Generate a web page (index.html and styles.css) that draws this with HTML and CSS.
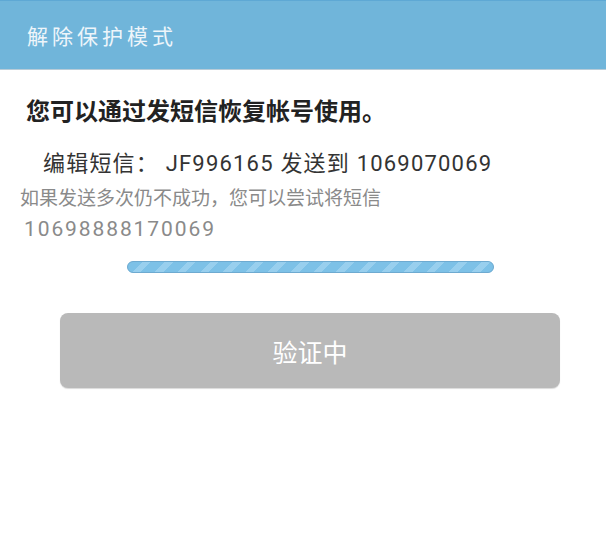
FILE: index.html
```html
<!DOCTYPE html>
<html lang="zh-CN">
<head>
<meta charset="utf-8">
<title>解除保护模式</title>
<link rel="stylesheet" href="styles.css">
</head>
<body>
<header class="topbar">
  <h1 class="topbar-title">解除保护模式</h1>
</header>
<main class="content">
  <p class="lead">您可以通过发短信恢复帐号使用。</p>
  <p class="instruction">编辑短信： JF996165 发送到 1069070069</p>
  <p class="hint">如果发送多次仍不成功，您可以尝试将短信<br><span class="hint-number">10698888170069</span></p>
  <div class="progress"></div>
  <div class="button">验证中</div>
</main>
</body>
</html>
```
FILE: styles.css
```css
html, body {
  margin: 0;
  padding: 0;
  background: #ffffff;
}
body {
  width: 606px;
  height: 553px;
  overflow: hidden;
  font-family: Roboto, "Noto Sans CJK SC", sans-serif;
}
.topbar {
  height: 68px;
  background: #70b5da;
  border-top: 1px solid #5ea8d4;
  border-bottom: 1px solid #b8ccd8;
  display: flex;
  align-items: center;
  padding-left: 27px;
  box-sizing: content-box;
}
.topbar-title {
  margin: 0;
  font-weight: normal;
  font-size: 21px;
  letter-spacing: 4px;
  color: #eef5fa;
  font-family: "Noto Sans CJK SC", sans-serif;
}
.content {
  padding: 0 20px;
}
.lead {
  margin: 24px 0 0 6px;
  font-family: "Noto Sans CJK SC", sans-serif;
  font-weight: bold;
  font-size: 24px;
  line-height: 32px;
  letter-spacing: 0;
  color: #222222;
}
.instruction {
  margin: 24px 0 0 23px;
  font-size: 22px;
  line-height: 28px;
  letter-spacing: 1.2px;
  color: #333333;
}
.hint {
  margin: 6px 0 0 0;
  font-size: 19px;
  line-height: 30px;
  letter-spacing: 0;
  color: #8a8a8a;
}
.hint-number {
  font-size: 21px;
  letter-spacing: 1.9px;
  margin-left: 4px;
}
.progress {
  margin: 16px 0 0 107px;
  width: 365px;
  height: 10px;
  border: 1px solid #6eaad0;
  border-radius: 6px;
  background-color: #7ec2e8;
  background-image: repeating-linear-gradient(135deg, #7dc1e7 0 10px, #98cfee 10px 16px);
}
.button {
  margin: 40px 0 0 40px;
  width: 500px;
  height: 75px;
  border-radius: 8px;
  background: #b9b9b9;
  color: #ffffff;
  font-family: "Noto Sans CJK SC", sans-serif;
  font-size: 25px;
  display: flex;
  align-items: center;
  justify-content: center;
  box-shadow: 0 1px 1px rgba(0,0,0,0.15);
}
```
